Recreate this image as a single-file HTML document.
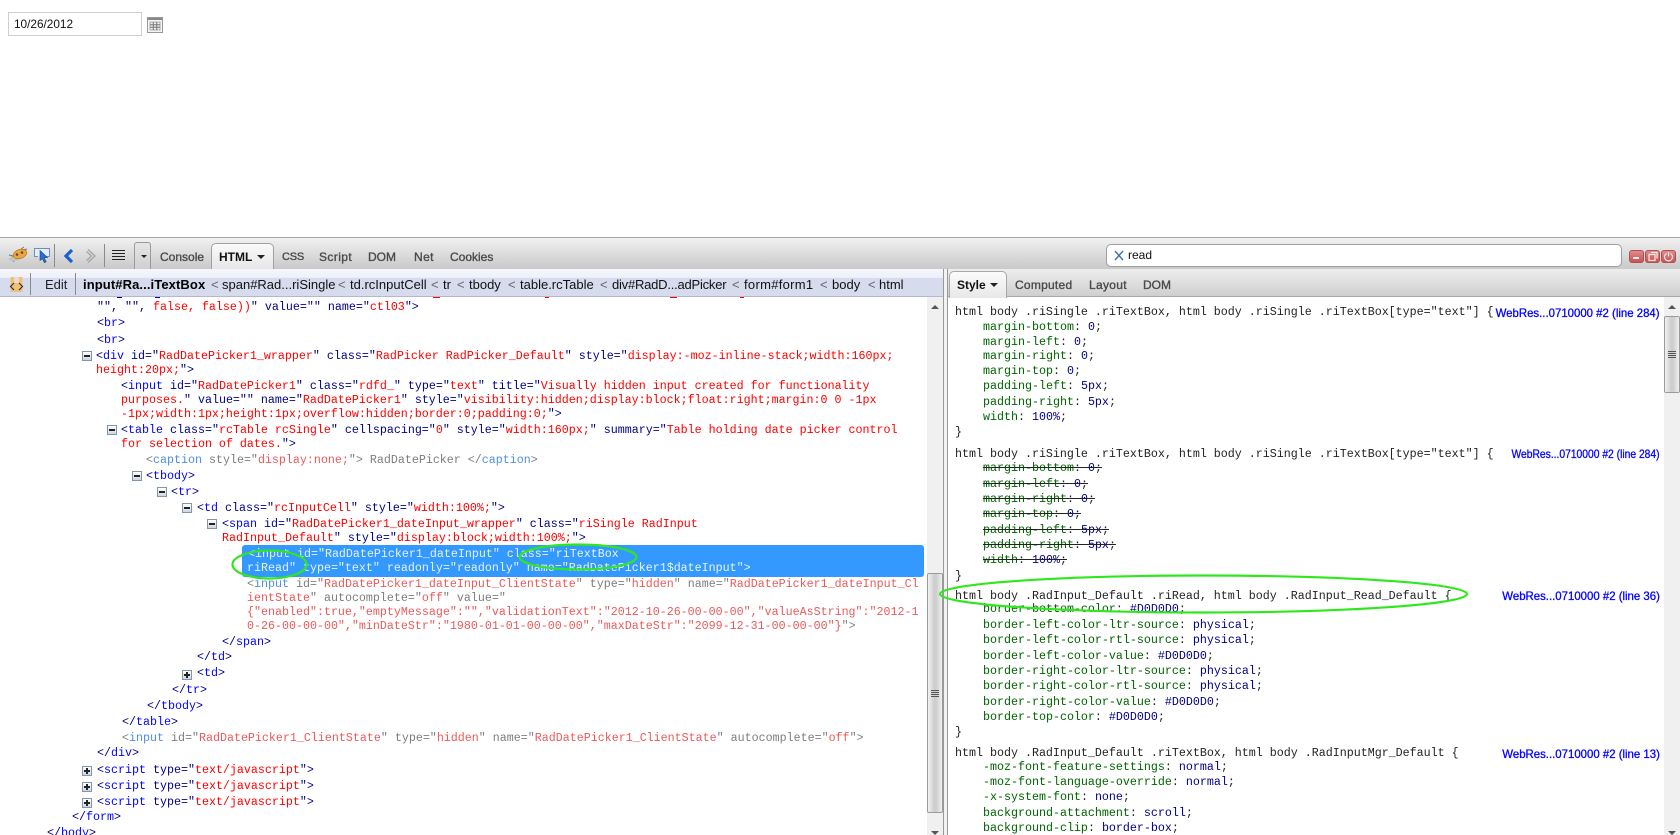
<!DOCTYPE html>
<html><head><meta charset="utf-8"><title>Firebug</title>
<style>
html,body{margin:0;padding:0;background:#fff}
#p{position:relative;width:1680px;height:835px;overflow:hidden;background:#fff;font-family:"Liberation Sans",sans-serif}
#p div,#p span.x{position:absolute}
.l{font:11.67px/16px "Liberation Mono",monospace;color:#000088;white-space:pre;height:16px}
.l b{font-weight:normal;color:#0000ff}
.l i{font-style:normal;color:#ff0000}
.l.g{color:#7d7d7d}
.l.g b{color:#4f8fe0}
.l.g i{color:#ea5a5a}
.r{font:11.67px/16px "Liberation Mono",monospace;color:#222;white-space:pre;height:16px}
.r em{font-style:normal;color:#006400}
.r u{text-decoration:none;color:#000088}
.r s{text-decoration:line-through}
.tb{font-size:12px;line-height:16px;color:#4a4a4a;white-space:nowrap;-webkit-text-stroke:.35px #4a4a4a}
.bc{font-size:13px;line-height:16px;color:#111;white-space:nowrap}
.lt{font-size:13px;line-height:16px;color:#666;white-space:nowrap}
.src{font-size:12px;line-height:16px;color:#0000ff;white-space:nowrap;-webkit-text-stroke:.3px #0000ff;transform-origin:100% 50%;right:20px;transform:scaleX(.95)}
.sep{width:1px;background:#8a8a8a}
.ex{width:8px;height:8px;border:1px solid #8296ab;background:linear-gradient(#fff,#cfd6de)}
.ex:before{content:"";position:absolute;left:1px;right:1px;top:3px;height:1.5px;background:#222}
.pl:after{content:"";position:absolute;top:1px;bottom:1px;left:3px;width:1.5px;background:#222}
.th{background:linear-gradient(90deg,#f2f2f2,#cdcdcd 45%,#cfcfcf 60%,#f0f0f0);border:1px solid #9a9a9a;border-radius:2px;box-sizing:border-box}
.gr{height:1px;background:#555}
.wb{width:15px;height:13px;top:250px;background:linear-gradient(#e48a8a,#c85252);border:1px solid #b05050;border-radius:3px;box-sizing:border-box}
</style></head><body><div id="p">

<!-- page content -->
<div style="left:8px;top:12px;width:134px;height:24px;box-sizing:border-box;border:1px solid #cfcfcf;background:#fff"></div>
<div style="left:14px;top:16px;font-size:11.8px;line-height:16px;color:#111">10/26/2012</div>
<svg style="position:absolute;left:147px;top:17px" width="16" height="16" viewBox="0 0 16 16"><rect x=".5" y=".5" width="15" height="15" fill="#f4f4f4" stroke="#999"/><rect x="1" y="1" width="14" height="2" fill="#888"/><path d="M3 5h10v8H3z" fill="#ececec" stroke="#999" stroke-width=".8"/><path d="M3 7.700h10M3 10.300h10M6.300 5v8M9.700 5v8" stroke="#777" stroke-width="1"/></svg>

<!-- toolbar -->
<div style="left:0;top:237px;width:1680px;height:1px;background:#a5a5a5"></div>
<div style="left:0;top:238px;width:1680px;height:31px;background:linear-gradient(#f1f1f1,#c9c9c9)"></div>
<svg style="position:absolute;left:7px;top:246px" width="22" height="18" viewBox="0 0 22 18"><path d="M3 14L8 8M6 16l4-5M2 9l4 1M14 3l3-2M16 4l4-1" stroke="#777" stroke-width="1" fill="none"/><ellipse cx="7" cy="13" rx="5.500" ry="2.200" fill="#c4c4c4" opacity=".9"/><ellipse cx="13" cy="8" rx="7" ry="4.500" transform="rotate(-18 13 8)" fill="#efa63a" stroke="#a87020" stroke-width=".6"/><circle cx="10" cy="8.500" r="1.300" fill="#644"/><circle cx="15" cy="6.500" r="1.300" fill="#644"/></svg>
<svg style="position:absolute;left:33px;top:247px" width="18" height="17" viewBox="0 0 18 17"><path d="M5 9.500H1.500v-8h15v8h-4" fill="#e6edf8" stroke="#6a8fc0" stroke-width="1"/><path d="M7 3.500l7.500 7-3.300.3 2 4-1.800.9-2-4L7 13.500z" fill="#2a70d0" stroke="#1a4a90" stroke-width=".6"/></svg>
<div class="sep" style="left:54px;top:244px;height:23px"></div>
<svg style="position:absolute;left:62px;top:248px" width="13" height="16" viewBox="0 0 13 16"><path d="M10 2L4 8l6 6" fill="none" stroke="#1a5fd0" stroke-width="3.200"/></svg>
<svg style="position:absolute;left:85px;top:248px" width="13" height="16" viewBox="0 0 13 16"><path d="M3 1.500L10 8l-7 6.500M1.500 3.500L6.500 8l-5 4.500" fill="none" stroke="#a4a4a4" stroke-width="1.300"/></svg>
<div class="sep" style="left:104px;top:244px;height:23px"></div>
<div style="left:112px;top:250px;width:13px;height:1px;background:#222"></div>
<div style="left:112px;top:253px;width:13px;height:1px;background:#222"></div>
<div style="left:112px;top:256px;width:13px;height:1px;background:#222"></div>
<div style="left:112px;top:259px;width:13px;height:1px;background:#222"></div>
<div style="left:134px;top:242px;width:17px;height:27px;box-sizing:border-box;border:1px solid #9a9a9a;border-bottom:0;border-radius:3px 3px 0 0;background:linear-gradient(#e6e6e6,#d0d0d0)"></div>
<div style="left:141px;top:255px;width:0;height:0;border:3px solid transparent;border-top:3px solid #222;border-bottom:0"></div>
<div class="tb" style="left:160px;top:249px">Console</div>
<div style="left:211px;top:243px;width:63px;height:27px;box-sizing:border-box;border:1px solid #a0a0a0;border-bottom:0;border-radius:5px 5px 0 0;background:linear-gradient(#fafafa,#e6e6e6)"></div>
<div class="tb" style="left:219px;top:249px;font-weight:bold;color:#111;-webkit-text-stroke:0">HTML</div>
<div style="left:257px;top:255px;width:0;height:0;border:4px solid transparent;border-top:4px solid #222;border-bottom:0"></div>
<div class="tb" style="left:282px;top:249px;font-size:11px;letter-spacing:-.2px">CSS</div>
<div class="tb" style="left:319px;top:249px;letter-spacing:.4px">Script</div>
<div class="tb" style="left:368px;top:249px">DOM</div>
<div class="tb" style="left:414px;top:249px;letter-spacing:.4px">Net</div>
<div class="tb" style="left:450px;top:249px">Cookies</div>

<div style="left:1106px;top:244px;width:516px;height:23px;box-sizing:border-box;border:1px solid #a0a0a0;border-radius:5px;background:#fff"></div>
<svg style="position:absolute;left:1114px;top:250px" width="10" height="11" viewBox="0 0 10 11"><path d="M1 1l8 9M9 1l-8 9" stroke="#3d6fa8" stroke-width="1.400"/></svg>
<div style="left:1128px;top:247px;font-size:12px;line-height:16px;color:#111">read</div>
<div class="wb" style="left:1629px"></div><div style="left:1633px;top:257px;width:6px;height:2px;background:#fbe8e8"></div>
<div class="wb" style="left:1645px"></div><svg style="position:absolute;left:1647px;top:251px" width="11" height="11" viewBox="0 0 11 11"><path d="M4 1.500h6v6M2 3.500h6v6H2z" fill="none" stroke="#fbe8e8" stroke-width="1.200"/></svg>
<div class="wb" style="left:1661px"></div><svg style="position:absolute;left:1663px;top:251px" width="11" height="11" viewBox="0 0 11 11"><path d="M3.500 2.500a4 4 0 1 0 4 0M5.500 1v4.500" fill="none" stroke="#fbe8e8" stroke-width="1.200"/></svg>

<!-- breadcrumb -->
<div style="left:0;top:269px;width:944px;height:28px;background:linear-gradient(#f6f7fc 0,#edf0f9 32%,#d6dbee 34%,#d6dbee 100%);box-sizing:border-box;border-bottom:1px solid #b4b8c8"></div>
<svg style="position:absolute;left:9px;top:277px" width="16" height="16" viewBox="0 0 16 16"><rect x="1.500" y="0" width="12" height="15" fill="#f0c078"/><rect x="5" y="0" width="5" height="6" fill="#e8dcc8"/><path d="M5 6L1.500 9.500 5 13M10 6l3.500 3.500L10 13" fill="none" stroke="#333" stroke-width="1.200"/></svg>
<div class="sep" style="left:30px;top:273px;height:22px"></div>
<div class="bc" style="left:45px;top:277px;color:#222">Edit</div>
<div class="sep" style="left:75px;top:273px;height:22px"></div>
<div class="bc" style="left:83px;top:277px;font-weight:bold;color:#000;letter-spacing:.1px">input#Ra...iTextBox</div>
<div class="lt" style="left:211px;top:277px">&lt;</div>
<div class="bc" style="left:222px;top:277px">span#Rad...riSingle</div>
<div class="lt" style="left:338px;top:277px">&lt;</div>
<div class="bc" style="left:350px;top:277px">td.rcInputCell</div>
<div class="lt" style="left:431px;top:277px">&lt;</div>
<div class="bc" style="left:443px;top:277px">tr</div>
<div class="lt" style="left:457px;top:277px">&lt;</div>
<div class="bc" style="left:469px;top:277px">tbody</div>
<div class="lt" style="left:508px;top:277px">&lt;</div>
<div class="bc" style="left:520px;top:277px">table.rcTable</div>
<div class="lt" style="left:600px;top:277px">&lt;</div>
<div class="bc" style="left:612px;top:277px;letter-spacing:-.22px">div#RadD...adPicker</div>
<div class="lt" style="left:732px;top:277px">&lt;</div>
<div class="bc" style="left:744px;top:277px;letter-spacing:.3px">form#form1</div>
<div class="lt" style="left:820px;top:277px">&lt;</div>
<div class="bc" style="left:832px;top:277px">body</div>
<div class="lt" style="left:868px;top:277px">&lt;</div>
<div class="bc" style="left:879px;top:277px">html</div>

<!-- right tab bar -->
<div style="left:944px;top:269px;width:736px;height:28px;background:linear-gradient(#eeeeee,#cfcfcf);box-sizing:border-box;border-bottom:1px solid #a8a8a8"></div>
<div style="left:949px;top:271px;width:58px;height:27px;box-sizing:border-box;border:1px solid #a8a8a8;border-bottom:0;border-radius:5px 5px 0 0;background:linear-gradient(#fbfbfb,#e8e8e8)"></div>
<div class="tb" style="left:957px;top:277px;font-weight:bold;color:#111;-webkit-text-stroke:0">Style</div>
<div style="left:990px;top:283px;width:0;height:0;border:4px solid transparent;border-top:4px solid #222;border-bottom:0"></div>
<div class="tb" style="left:1015px;top:277px;letter-spacing:.25px">Computed</div>
<div class="tb" style="left:1089px;top:277px;letter-spacing:.3px">Layout</div>
<div class="tb" style="left:1143px;top:277px">DOM</div>

<!-- splitter + scrollbars -->
<div style="left:943px;top:269px;width:5px;height:566px;box-sizing:border-box;background:#f2f2f2;border-left:1px solid #999;border-right:1px solid #999"></div>
<div style="left:927px;top:297px;width:16px;height:538px;background:#f0f0f0"></div>
<div style="left:931px;top:305px;width:0;height:0;border:4px solid transparent;border-bottom:4px solid #555;border-top:0"></div>
<div class="th" style="left:927px;top:573px;width:16px;height:240px"></div>
<div class="gr" style="left:931px;top:690px;width:8px"></div><div class="gr" style="left:931px;top:692px;width:8px"></div><div class="gr" style="left:931px;top:694px;width:8px"></div><div class="gr" style="left:931px;top:696px;width:8px"></div>
<div style="left:931px;top:831px;width:0;height:0;border:4px solid transparent;border-top:4px solid #555;border-bottom:0"></div>
<div style="left:1664px;top:297px;width:16px;height:538px;background:#f0f0f0"></div>
<div style="left:1668px;top:305px;width:0;height:0;border:4px solid transparent;border-bottom:4px solid #555;border-top:0"></div>
<div class="th" style="left:1664px;top:316px;width:16px;height:77px"></div>
<div class="gr" style="left:1668px;top:351px;width:8px"></div><div class="gr" style="left:1668px;top:353px;width:8px"></div><div class="gr" style="left:1668px;top:355px;width:8px"></div><div class="gr" style="left:1668px;top:357px;width:8px"></div>
<div style="left:1668px;top:831px;width:0;height:0;border:4px solid transparent;border-top:4px solid #555;border-bottom:0"></div>

<!-- clipped row fragments -->
<div style="left:117px;top:297px;width:5px;height:1px;background:#0000aa"></div>
<div style="left:155px;top:297px;width:5px;height:1px;background:#0000aa"></div>
<div style="left:433px;top:297px;width:7px;height:1px;background:#f00"></div>
<div style="left:545px;top:297px;width:4px;height:1px;background:#f00"></div>
<div style="left:670px;top:297px;width:7px;height:1px;background:#f00"></div>
<div style="left:740px;top:297px;width:4px;height:1px;background:#f00"></div>

<!-- left panel: html tree -->
<div style="left:242px;top:545px;width:682px;height:32px;background:#3399ff;border-radius:3px"></div>

<div class="l" style="left:97px;top:299px">"", "", <i>false, false))</i>" value="" name="<i>ctl03</i>"&gt;</div>
<div class="l" style="left:97px;top:315px">&lt;<b>br</b>&gt;</div>
<div class="l" style="left:97px;top:332px">&lt;<b>br</b>&gt;</div>
<div class="ex" style="left:82px;top:351px"></div>
<div class="l" style="left:96px;top:348px">&lt;<b>div</b> id="<i>RadDatePicker1_wrapper</i>" class="<i>RadPicker RadPicker_Default</i>" style="<i>display:-moz-inline-stack;width:160px;</i></div>
<div class="l" style="left:96px;top:362px"><i>height:20px;</i>"&gt;</div>
<div class="l" style="left:121px;top:378px">&lt;<b>input</b> id="<i>RadDatePicker1</i>" class="<i>rdfd_</i>" type="<i>text</i>" title="<i>Visually hidden input created for functionality</i></div>
<div class="l" style="left:121px;top:392px"><i>purposes.</i>" value="" name="<i>RadDatePicker1</i>" style="<i>visibility:hidden;display:block;float:right;margin:0 0 -1px</i></div>
<div class="l" style="left:121px;top:406px"><i>-1px;width:1px;height:1px;overflow:hidden;border:0;padding:0;</i>"&gt;</div>
<div class="ex" style="left:107px;top:425px"></div>
<div class="l" style="left:121px;top:422px">&lt;<b>table</b> class="<i>rcTable rcSingle</i>" cellspacing="<i>0</i>" style="<i>width:160px;</i>" summary="<i>Table holding date picker control</i></div>
<div class="l" style="left:121px;top:436px"><i>for selection of dates.</i>"&gt;</div>
<div class="l g" style="left:146px;top:452px">&lt;<b>caption</b> style="<i>display:none;</i>"&gt; RadDatePicker &lt;/<b>caption</b>&gt;</div>
<div class="ex" style="left:132px;top:471px"></div>
<div class="l" style="left:146px;top:468px">&lt;<b>tbody</b>&gt;</div>
<div class="ex" style="left:157px;top:487px"></div>
<div class="l" style="left:171px;top:484px">&lt;<b>tr</b>&gt;</div>
<div class="ex" style="left:182px;top:503px"></div>
<div class="l" style="left:197px;top:500px">&lt;<b>td</b> class="<i>rcInputCell</i>" style="<i>width:100%;</i>"&gt;</div>
<div class="ex" style="left:207px;top:519px"></div>
<div class="l" style="left:222px;top:516px">&lt;<b>span</b> id="<i>RadDatePicker1_dateInput_wrapper</i>" class="<i>riSingle RadInput</i></div>
<div class="l" style="left:222px;top:530px"><i>RadInput_Default</i>" style="<i>display:block;width:100%;</i>"&gt;</div>
<div class="l" style="left:248px;top:546px;color:#e8f2ff">&lt;input id="RadDatePicker1_dateInput" class="riTextBox</div>
<div class="l" style="left:247px;top:560px;color:#e8f2ff">riRead" type="text" readonly="readonly" name="RadDatePicker1$dateInput"&gt;</div>
<div class="l g" style="left:247px;top:576px">&lt;<b>input</b> id="<i>RadDatePicker1_dateInput_ClientState</i>" type="<i>hidden</i>" name="<i>RadDatePicker1_dateInput_Cl</i></div>
<div class="l g" style="left:247px;top:590px"><i>ientState</i>" autocomplete="<i>off</i>" value="</div>
<div class="l g" style="left:247px;top:604px"><i>{"enabled":true,"emptyMessage":"","validationText":"2012-10-26-00-00-00","valueAsString":"2012-1</i></div>
<div class="l g" style="left:247px;top:618px"><i>0-26-00-00-00","minDateStr":"1980-01-01-00-00-00","maxDateStr":"2099-12-31-00-00-00"}</i>"&gt;</div>
<div class="l" style="left:222px;top:634px">&lt;/<b>span</b>&gt;</div>
<div class="l" style="left:197px;top:649px">&lt;/<b>td</b>&gt;</div>
<div class="ex pl" style="left:182px;top:670px"></div>
<div class="l" style="left:197px;top:665px">&lt;<b>td</b>&gt;</div>
<div class="l" style="left:172px;top:682px">&lt;/<b>tr</b>&gt;</div>
<div class="l" style="left:147px;top:698px">&lt;/<b>tbody</b>&gt;</div>
<div class="l" style="left:122px;top:714px">&lt;/<b>table</b>&gt;</div>
<div class="l g" style="left:122px;top:730px">&lt;<b>input</b> id="<i>RadDatePicker1_ClientState</i>" type="<i>hidden</i>" name="<i>RadDatePicker1_ClientState</i>" autocomplete="<i>off</i>"&gt;</div>
<div class="l" style="left:97px;top:745px">&lt;/<b>div</b>&gt;</div>
<div class="ex pl" style="left:82px;top:766px"></div>
<div class="l" style="left:97px;top:762px">&lt;<b>script</b> type="<i>text/javascript</i>"&gt;</div>
<div class="ex pl" style="left:82px;top:782px"></div>
<div class="l" style="left:97px;top:778px">&lt;<b>script</b> type="<i>text/javascript</i>"&gt;</div>
<div class="ex pl" style="left:82px;top:798px"></div>
<div class="l" style="left:97px;top:794px">&lt;<b>script</b> type="<i>text/javascript</i>"&gt;</div>
<div class="l" style="left:72px;top:809px">&lt;/<b>form</b>&gt;</div>
<div class="l" style="left:47px;top:825px">&lt;/<b>body</b>&gt;</div>

<!-- right panel: css rules -->
<div class="r" style="left:955px;top:304px">html body .riSingle .riTextBox, html body .riSingle .riTextBox[type="text"] {</div>
<div class="src" style="top:305px">WebRes...0710000 #2 (line 284)</div>
<div class="r" style="left:983px;top:319px"><em>margin-bottom</em>: <u>0</u>;</div>
<div class="r" style="left:983px;top:334px"><em>margin-left</em>: <u>0</u>;</div>
<div class="r" style="left:983px;top:348px"><em>margin-right</em>: <u>0</u>;</div>
<div class="r" style="left:983px;top:363px"><em>margin-top</em>: <u>0</u>;</div>
<div class="r" style="left:983px;top:378px"><em>padding-left</em>: <u>5px</u>;</div>
<div class="r" style="left:983px;top:394px"><em>padding-right</em>: <u>5px</u>;</div>
<div class="r" style="left:983px;top:409px"><em>width</em>: <u>100%</u>;</div>
<div class="r" style="left:955px;top:424px">}</div>

<div class="r" style="left:955px;top:446px">html body .riSingle .riTextBox, html body .riSingle .riTextBox[type="text"] {</div>
<div class="src" style="top:446px;transform:scaleX(.858)">WebRes...0710000 #2 (line 284)</div>
<div class="r" style="left:983px;top:460px"><s><em>margin-bottom</em>: <u>0</u>;</s></div>
<div class="r" style="left:983px;top:476px"><s><em>margin-left</em>: <u>0</u>;</s></div>
<div class="r" style="left:983px;top:491px"><s><em>margin-right</em>: <u>0</u>;</s></div>
<div class="r" style="left:983px;top:506px"><s><em>margin-top</em>: <u>0</u>;</s></div>
<div class="r" style="left:983px;top:522px"><s><em>padding-left</em>: <u>5px</u>;</s></div>
<div class="r" style="left:983px;top:537px"><s><em>padding-right</em>: <u>5px</u>;</s></div>
<div class="r" style="left:983px;top:552px"><s><em>width</em>: <u>100%</u>;</s></div>
<div class="r" style="left:955px;top:568px">}</div>

<div class="r" style="left:955px;top:588px">html body .RadInput_Default .riRead, html body .RadInput_Read_Default {</div>
<div class="src" style="top:588px">WebRes...0710000 #2 (line 36)</div>
<div class="r" style="left:983px;top:601px"><em>border-bottom-color</em>: <u>#D0D0D0</u>;</div>
<div class="r" style="left:983px;top:617px"><em>border-left-color-ltr-source</em>: <u>physical</u>;</div>
<div class="r" style="left:983px;top:632px"><em>border-left-color-rtl-source</em>: <u>physical</u>;</div>
<div class="r" style="left:983px;top:648px"><em>border-left-color-value</em>: <u>#D0D0D0</u>;</div>
<div class="r" style="left:983px;top:663px"><em>border-right-color-ltr-source</em>: <u>physical</u>;</div>
<div class="r" style="left:983px;top:678px"><em>border-right-color-rtl-source</em>: <u>physical</u>;</div>
<div class="r" style="left:983px;top:694px"><em>border-right-color-value</em>: <u>#D0D0D0</u>;</div>
<div class="r" style="left:983px;top:709px"><em>border-top-color</em>: <u>#D0D0D0</u>;</div>
<div class="r" style="left:955px;top:724px">}</div>

<div class="r" style="left:955px;top:745px">html body .RadInput_Default .riTextBox, html body .RadInputMgr_Default {</div>
<div class="src" style="top:746px">WebRes...0710000 #2 (line 13)</div>
<div class="r" style="left:983px;top:759px"><em>-moz-font-feature-settings</em>: <u>normal</u>;</div>
<div class="r" style="left:983px;top:774px"><em>-moz-font-language-override</em>: <u>normal</u>;</div>
<div class="r" style="left:983px;top:789px"><em>-x-system-font</em>: <u>none</u>;</div>
<div class="r" style="left:983px;top:805px"><em>background-attachment</em>: <u>scroll</u>;</div>
<div class="r" style="left:983px;top:820px"><em>background-clip</em>: <u>border-box</u>;</div>

<!-- green annotation ellipses -->
<svg style="position:absolute;left:0;top:0" width="1680" height="835" viewBox="0 0 1680 835" fill="none" stroke="#2fe81c" stroke-width="2.200">
<ellipse cx="269.500" cy="564.500" rx="37" ry="14"/>
<ellipse cx="578" cy="557" rx="58.500" ry="12.500"/>
<ellipse cx="1203.500" cy="594" rx="263.500" ry="18.500"/>
</svg>
</div></body></html>
